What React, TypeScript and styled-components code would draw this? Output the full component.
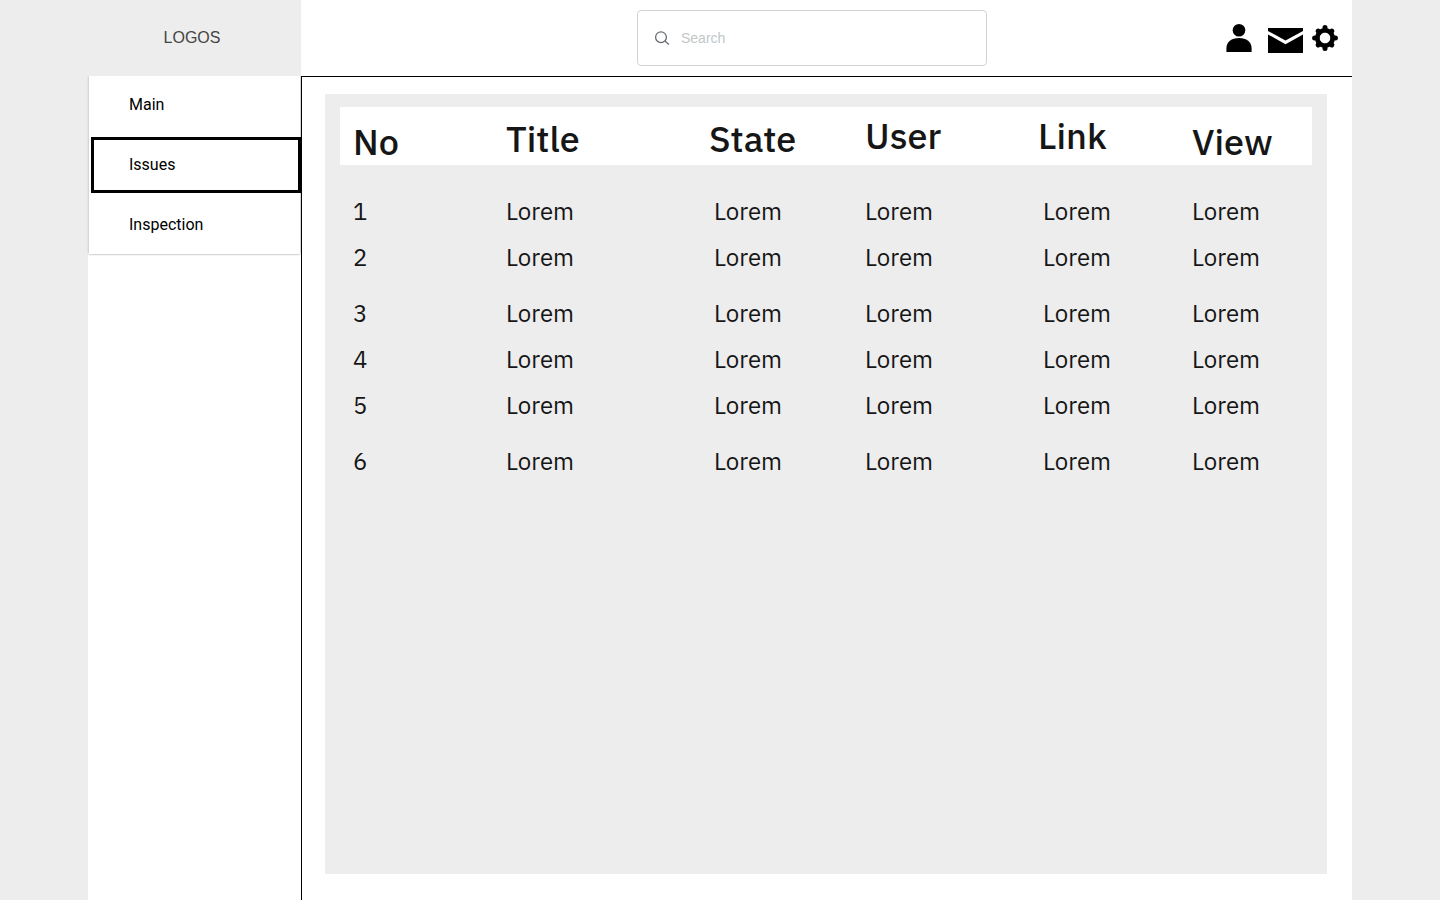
import React from "react";
import styled, { createGlobalStyle } from "styled-components";

const GlobalStyle = createGlobalStyle`
  * { box-sizing: border-box; }
  body {
    margin: 0;
    background: #ededed;
    color: #000;
    font-family: Roboto, "Liberation Sans", sans-serif;
  }
  button, input { font: inherit; }
`;

const Page = styled.div`
  display: grid;
  grid-template-columns: 213px minmax(0, 1fr);
  grid-template-rows: 76px 1fr;
  min-height: 100vh;
  padding: 0 88px;
`;

const Logo = styled.div`
  display: flex;
  align-items: center;
  justify-content: center;
  padding-right: 5px;
  color: #444;
  font: 16px/24px "Liberation Sans", Arial, sans-serif;
`;

const TopBar = styled.header`
  display: grid;
  grid-template-columns: 336fr 350px 351fr;
  align-items: center;
  padding-right: 14px;
  background: #fff;
`;

const SearchBox = styled.label`
  grid-column: 2;
  display: flex;
  align-items: center;
  gap: 11px;
  height: 56px;
  padding: 0 16px;
  border: 1px solid #d0d3d6;
  border-radius: 4px;
`;

const SearchInput = styled.input`
  flex: 1;
  min-width: 0;
  padding: 0;
  border: 0;
  outline: 0;
  background: transparent;
  font-family: "Liberation Sans", Arial, sans-serif;
  font-size: 14px;
  line-height: 20px;
  &::placeholder { color: #c1c7c7; opacity: 1; }
`;

const Actions = styled.div`
  display: flex;
  align-items: center;
  justify-content: flex-end;
`;

const IconButton = styled.button<{ $gap?: number }>`
  display: flex;
  margin: 0 0 0 ${(p) => p.$gap ?? 0}px;
  padding: 0;
  border: 0;
  background: none;
  color: #000;
  cursor: pointer;
`;

const Sidebar = styled.aside`
  background: #fff;
`;

const Menu = styled.nav`
  display: flex;
  flex-direction: column;
  gap: 4px;
  margin: 0 1px;
  padding: 1px 0 1px 2px;
  box-shadow: 0 0 2px rgba(0, 0, 0, 0.5);
  clip-path: inset(0 -1px -4px -4px);
`;

const MenuLink = styled.a<{ $active?: boolean }>`
  display: flex;
  align-items: center;
  height: 56px;
  margin-right: -1px;
  padding-left: 35px;
  border: 3px solid ${(p) => (p.$active ? "#000" : "transparent")};
  color: #000;
  font-size: 16px;
  line-height: 24px;
  text-decoration: none;
`;

const Main = styled.main`
  display: flex;
  padding: 17px 25px 26px 23px;
  border-top: 1px solid #000;
  border-left: 1px solid #000;
  background: #fff;
`;

const Panel = styled.section`
  flex: 1;
  min-width: 0;
  padding: 13px 15px;
  background: #ededed;
`;

const Table = styled.table`
  width: 100%;
  table-layout: fixed;
  border-collapse: collapse;
  color: #161616;
  font-family: "IBM Plex Sans", Roboto, sans-serif;
`;

const HeadCell = styled.th<{ $align: Align }>`
  height: 58px;
  padding: 7px 0 1px 13px;
  background: #fff;
  font-size: 36px;
  font-weight: 500;
  line-height: 44px;
  text-align: left;
  vertical-align: ${(p) => p.$align};
`;

const BodyRow = styled.tr<{ $spaced: boolean }>`
  height: ${(p) => (p.$spaced ? 56 : 46)}px;
`;

const BodyCell = styled.td<{ $indent?: boolean }>`
  padding: 0 0 8px ${(p) => (p.$indent ? 18 : 13)}px;
  font-size: 24px;
  line-height: 32px;
  vertical-align: bottom;
`;

const HeadGap = styled.tbody`
  td { height: 24px; padding: 0; }
`;

type Align = "top" | "middle" | "bottom";

const columns: { name: string; width: number; align: Align; indent?: boolean }[] = [
  { name: "No", width: 153, align: "bottom" },
  { name: "Title", width: 203, align: "middle" },
  { name: "State", width: 156, align: "middle", indent: true },
  { name: "User", width: 173, align: "top" },
  { name: "Link", width: 154, align: "top", indent: true },
  { name: "View", width: 133, align: "bottom" },
];

const Col = styled.col<{ $width: number }>`
  width: ${(p) => p.$width}px;
`;

const rows = [1, 2, 3, 4, 5, 6].map((n) => [String(n), "Lorem", "Lorem", "Lorem", "Lorem", "Lorem"]);

const SearchIcon = () => (
  <svg width="16" height="16" viewBox="0 0 16 16" fill="none" stroke="#6a6e73" strokeWidth="1.3" aria-hidden="true">
    <circle cx="7" cy="7.2" r="5.4" />
    <path d="M10.9 11.1 15 14.6" />
  </svg>
);

const PersonIcon = () => (
  <svg width="26" height="28" viewBox="0 0 26 28" fill="currentColor" aria-hidden="true">
    <circle cx="13" cy="6.3" r="6.3" />
    <path d="M0.4 28v-3.5C0.4 17.6 5.5 14 13 14s12.6 3.6 12.6 10.5V28z" />
  </svg>
);

const MailIcon = () => (
  <svg width="35" height="29" viewBox="0 -4 35 29" fill="currentColor" aria-hidden="true">
    <path d="M0 0h35v3L17.5 12.4 0 3z" />
    <path d="M0 6.4 17.5 16.2 35 6.4V25H0z" />
  </svg>
);

const GearIcon = () => (
  <svg width="26" height="26" viewBox="-13 -13 26 26" fill="none" stroke="currentColor" aria-hidden="true">
    <circle r="7.7" strokeWidth="4.6" />
    {[0, 45, 90, 135, 180, 225, 270, 315].map((a) => (
      <path key={a} d={a % 90 ? "M0-8V-9.7" : "M0-8V-10.4"} strokeWidth="5" strokeLinecap="round" transform={`rotate(${a})`} />
    ))}
  </svg>
);

export default function App() {
  return (
    <>
      <GlobalStyle />
      <Page>
        <Logo>LOGOS</Logo>
        <TopBar>
          <SearchBox>
            <SearchIcon />
            <SearchInput type="text" placeholder="Search" aria-label="Search" />
          </SearchBox>
          <Actions>
            <IconButton type="button" aria-label="Account"><PersonIcon /></IconButton>
            <IconButton type="button" aria-label="Messages" $gap={16}><MailIcon /></IconButton>
            <IconButton type="button" aria-label="Settings" $gap={9}><GearIcon /></IconButton>
          </Actions>
        </TopBar>
        <Sidebar>
          <Menu>
            <MenuLink href="#main">Main</MenuLink>
            <MenuLink href="#issues" $active aria-current="page">Issues</MenuLink>
            <MenuLink href="#inspection">Inspection</MenuLink>
          </Menu>
        </Sidebar>
        <Main>
          <Panel>
            <Table>
              <colgroup>
                {columns.map((c) => <Col key={c.name} $width={c.width} />)}
              </colgroup>
              <thead>
                <tr>
                  {columns.map((c) => <HeadCell key={c.name} scope="col" $align={c.align}>{c.name}</HeadCell>)}
                </tr>
              </thead>
              <HeadGap aria-hidden="true"><tr><td colSpan={6} /></tr></HeadGap>
              <tbody>
                {rows.map((cells, r) => (
                  <BodyRow key={r} $spaced={r > 0 && (r + 1) % 3 === 0}>
                    {cells.map((text, i) => <BodyCell key={i} $indent={columns[i].indent}>{text}</BodyCell>)}
                  </BodyRow>
                ))}
              </tbody>
            </Table>
          </Panel>
        </Main>
      </Page>
    </>
  );
}
